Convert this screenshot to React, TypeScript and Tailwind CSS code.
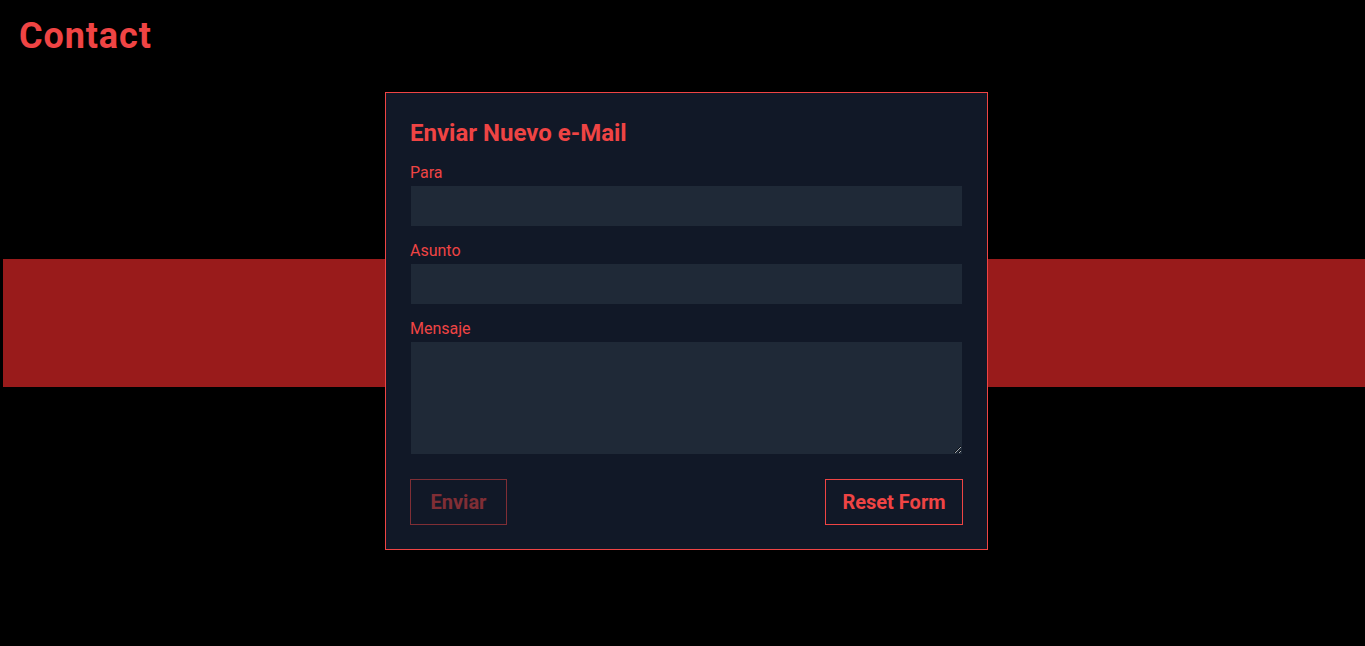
import React, { useState } from 'react';

const Field: React.FC<{ label: string; children: React.ReactNode }> = ({ label, children }) => (
  <div className="flex flex-col mb-3">
    <label className="text-base text-[#ef4444]">{label}</label>
    {children}
  </div>
);

const App: React.FC = () => {
  const [to, setTo] = useState('');
  const [subject, setSubject] = useState('');
  const [message, setMessage] = useState('');

  const canSend = to.trim() !== '' && subject.trim() !== '' && message.trim() !== '';

  const reset = () => {
    setTo('');
    setSubject('');
    setMessage('');
  };

  return (
    <div className="min-h-screen bg-black font-['Roboto',_'Liberation_Sans',_sans-serif]">
      <h1 className="px-[19px] pt-4 text-4xl font-bold tracking-wide text-[#ef4444]">Contact</h1>

      {/* banda roja detrás del formulario */}
      <section className="grid pl-[3px] mt-9">
        <div className="col-start-1 row-start-1 self-start mt-[167px] h-[128px] bg-[#991b1b]"></div>

        <form
          className="col-start-1 row-start-1 justify-self-center ml-[5px] w-[603px] border border-[#ef4444] bg-[#111827] p-6"
          onSubmit={(e) => e.preventDefault()}
        >
          <h2 className="mb-3 text-2xl font-bold text-[#ef4444]">Enviar Nuevo e-Mail</h2>

          <Field label="Para">
            <input
              value={to}
              onChange={(e) => setTo(e.target.value)}
              className="h-[42px] w-full border border-[#111827] bg-[#1f2937] px-3 text-white outline-none"
            />
          </Field>
          <Field label="Asunto">
            <input
              value={subject}
              onChange={(e) => setSubject(e.target.value)}
              className="h-[42px] w-full border border-[#111827] bg-[#1f2937] px-3 text-white outline-none"
            />
          </Field>
          <Field label="Mensaje">
            <textarea
              value={message}
              onChange={(e) => setMessage(e.target.value)}
              className="h-[114px] w-full border border-[#111827] bg-[#1f2937] px-3 py-2 text-white outline-none"
            />
          </Field>

          <div className="mt-6 flex items-center justify-between">
            <button
              type="submit"
              disabled={!canSend}
              className="w-[97px] border border-[#ef4444] py-2 text-xl font-bold text-[#ef4444] disabled:opacity-50"
            >
              Enviar
            </button>
            <button
              type="button"
              onClick={reset}
              className="w-[138px] border border-[#ef4444] py-2 text-xl font-bold text-[#ef4444]"
            >
              Reset Form
            </button>
          </div>
        </form>
      </section>
    </div>
  );
};

export default App;
